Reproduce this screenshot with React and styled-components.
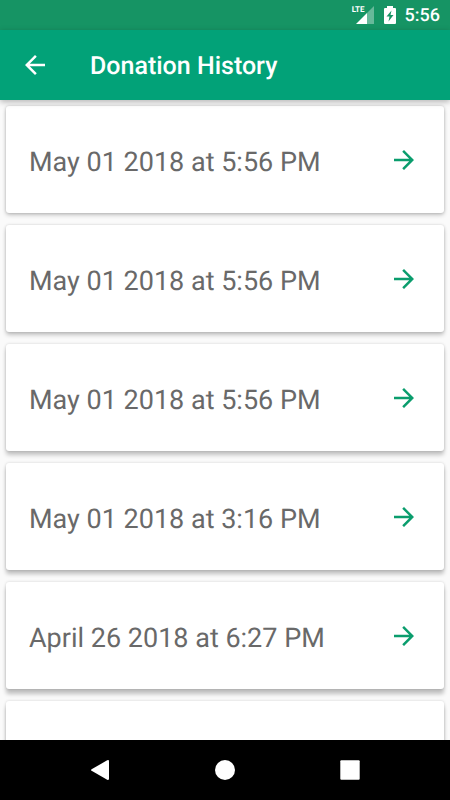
import React from "react";
import styled, { createGlobalStyle } from "styled-components";

const GlobalStyle = createGlobalStyle`
  *, *::before, *::after { box-sizing: border-box; }
  body {
    margin: 0;
    background: #fafafa;
    font-family: Roboto, "Liberation Sans", sans-serif;
    text-rendering: geometricPrecision;
  }
`;

const Screen = styled.div`
  height: 100vh;
  display: flex;
  flex-direction: column;
  overflow: hidden;
`;

const StatusBar = styled.div`
  flex: none;
  height: 30px;
  padding: 0 10px;
  display: flex;
  align-items: center;
  justify-content: flex-end;
  background: #169464;
  color: #fff;
`;

const Network = styled.div`
  display: flex;
  align-items: flex-start;
  height: 18px;
  margin-right: 10px;
`;

const NetworkType = styled.span`
  font-size: 8px;
  line-height: 8px;
  font-weight: 700;
  margin-right: -9px;
`;

const Clock = styled.time`
  margin-left: 9px;
  font-size: 18px;
  line-height: 30px;
  font-weight: 500;
  padding-top: 2px;
`;

const AppBar = styled.header`
  flex: none;
  position: relative;
  z-index: 1;
  height: 70px;
  padding: 0 20px;
  display: flex;
  align-items: center;
  gap: 40px;
  background: #02a278;
  color: #fff;
  box-shadow: 0 2px 6px rgba(0, 0, 0, 0.28);
`;

const Title = styled.h1`
  margin: 0;
  padding-top: 4px;
  font-size: 25px;
  line-height: 30px;
  font-weight: 500;
`;

const IconButton = styled.button`
  display: flex;
  padding: 0;
  border: 0;
  background: none;
  color: inherit;
  cursor: pointer;
`;

const History = styled.main`
  flex: 1;
  min-height: 0;
  overflow: hidden;
`;

const List = styled.ul`
  list-style: none;
  margin: 0;
  padding: 6px;
  display: flex;
  flex-direction: column;
  gap: 12px;
`;

const Card = styled.a`
  display: flex;
  align-items: center;
  justify-content: space-between;
  height: 107px;
  padding: 0 25px 0 23px;
  border-radius: 3px;
  background: #fff;
  color: #696969;
  font-size: 27px;
  line-height: 36px;
  text-decoration: none;
  white-space: nowrap;
  box-shadow:
    0 0 3px rgba(0, 0, 0, 0.16),
    0 ${(p) => p.$drop}px 4px rgba(0, 0, 0, ${(p) => p.$shade});
`;

const CardDate = styled.span`
  padding-top: 4px;
`;

const CardArrow = styled.span`
  display: flex;
  color: #0a9d6d;
`;

const NavBar = styled.nav`
  flex: none;
  position: relative;
  z-index: 1;
  height: 60px;
  padding: 0 37px;
  display: flex;
  align-items: center;
  justify-content: center;
  gap: 65px;
  background: #000;
  color: #fff;
`;

const NavButton = styled(IconButton)`
  width: 60px;
  height: 60px;
  align-items: center;
  justify-content: center;
`;

const BackArrow = () => (
  <svg width="30" height="30" viewBox="0 0 24 24" fill="currentColor" aria-hidden="true">
    <path d="M20 11H7.83l5.59-5.59L12 4l-8 8 8 8 1.41-1.41L7.83 13H20z" />
  </svg>
);

const ForwardArrow = () => (
  <svg width="30" height="30" viewBox="0 0 24 24" fill="currentColor" aria-hidden="true">
    <path d="M12 4l-1.41 1.41L16.17 11H4v2h12.17l-5.58 5.59L12 20l8-8z" />
  </svg>
);

const SignalIcon = () => (
  <svg width="18" height="18" viewBox="0 0 18 18" fill="currentColor" aria-hidden="true">
    <path d="M18 0L11 7V18h7z" opacity="0.35" />
    <path d="M11 7L0 18h11z" />
  </svg>
);

const BatteryIcon = () => (
  <svg width="12" height="18" viewBox="0 0 12 18" aria-hidden="true">
    <path
      fill="#fff"
      fillRule="evenodd"
      d="M3 0h6v2h2q1 0 1 1v14q0 1-1 1H1q-1 0-1-1V3q0-1 1-1h2zM7.5 4.5L2.5 10.5h3l-1 5L9.5 9h-3z"
    />
  </svg>
);

const donations = [
  { date: "May 01 2018 at 5:56 PM", drop: 2, shade: 0.22 },
  { date: "May 01 2018 at 5:56 PM", drop: 3, shade: 0.22 },
  { date: "May 01 2018 at 5:56 PM", drop: 4, shade: 0.22 },
  { date: "May 01 2018 at 3:16 PM", drop: 4, shade: 0.24 },
  { date: "April 26 2018 at 6:27 PM", drop: 5, shade: 0.24 },
  { date: "", drop: 5, shade: 0.24 },
];

export default function App() {
  return (
    <Screen>
      <GlobalStyle />
      <StatusBar>
        <Network>
          <NetworkType>LTE</NetworkType>
          <SignalIcon />
        </Network>
        <BatteryIcon />
        <Clock>5:56</Clock>
      </StatusBar>
      <AppBar>
        <IconButton type="button" aria-label="Navigate up">
          <BackArrow />
        </IconButton>
        <Title>Donation History</Title>
      </AppBar>
      <History>
        <List>
          {donations.map(({ date, drop, shade }, i) => (
            <li key={i}>
              <Card href="#donation" $drop={drop} $shade={shade}>
                <CardDate>{date}</CardDate>
                <CardArrow>
                  <ForwardArrow />
                </CardArrow>
              </Card>
            </li>
          ))}
        </List>
      </History>
      <NavBar>
        <NavButton type="button" aria-label="Back">
          <svg width="20" height="20" viewBox="0 0 20 20" fill="currentColor" aria-hidden="true">
            <path d="M17.2 0.3Q19 -0.5 19 1.2V18.8Q19 20.5 17.2 19.7L1.6 10.8Q0.4 10 1.6 9.2z" />
          </svg>
        </NavButton>
        <NavButton type="button" aria-label="Home">
          <svg width="20" height="20" viewBox="0 0 20 20" fill="currentColor" aria-hidden="true">
            <circle cx="10" cy="10" r="10" />
          </svg>
        </NavButton>
        <NavButton type="button" aria-label="Recent apps">
          <svg width="20" height="20" viewBox="0 0 20 20" fill="currentColor" aria-hidden="true">
            <rect x="0.3" y="0.3" width="19.4" height="19.4" rx="1" />
          </svg>
        </NavButton>
      </NavBar>
    </Screen>
  );
}
